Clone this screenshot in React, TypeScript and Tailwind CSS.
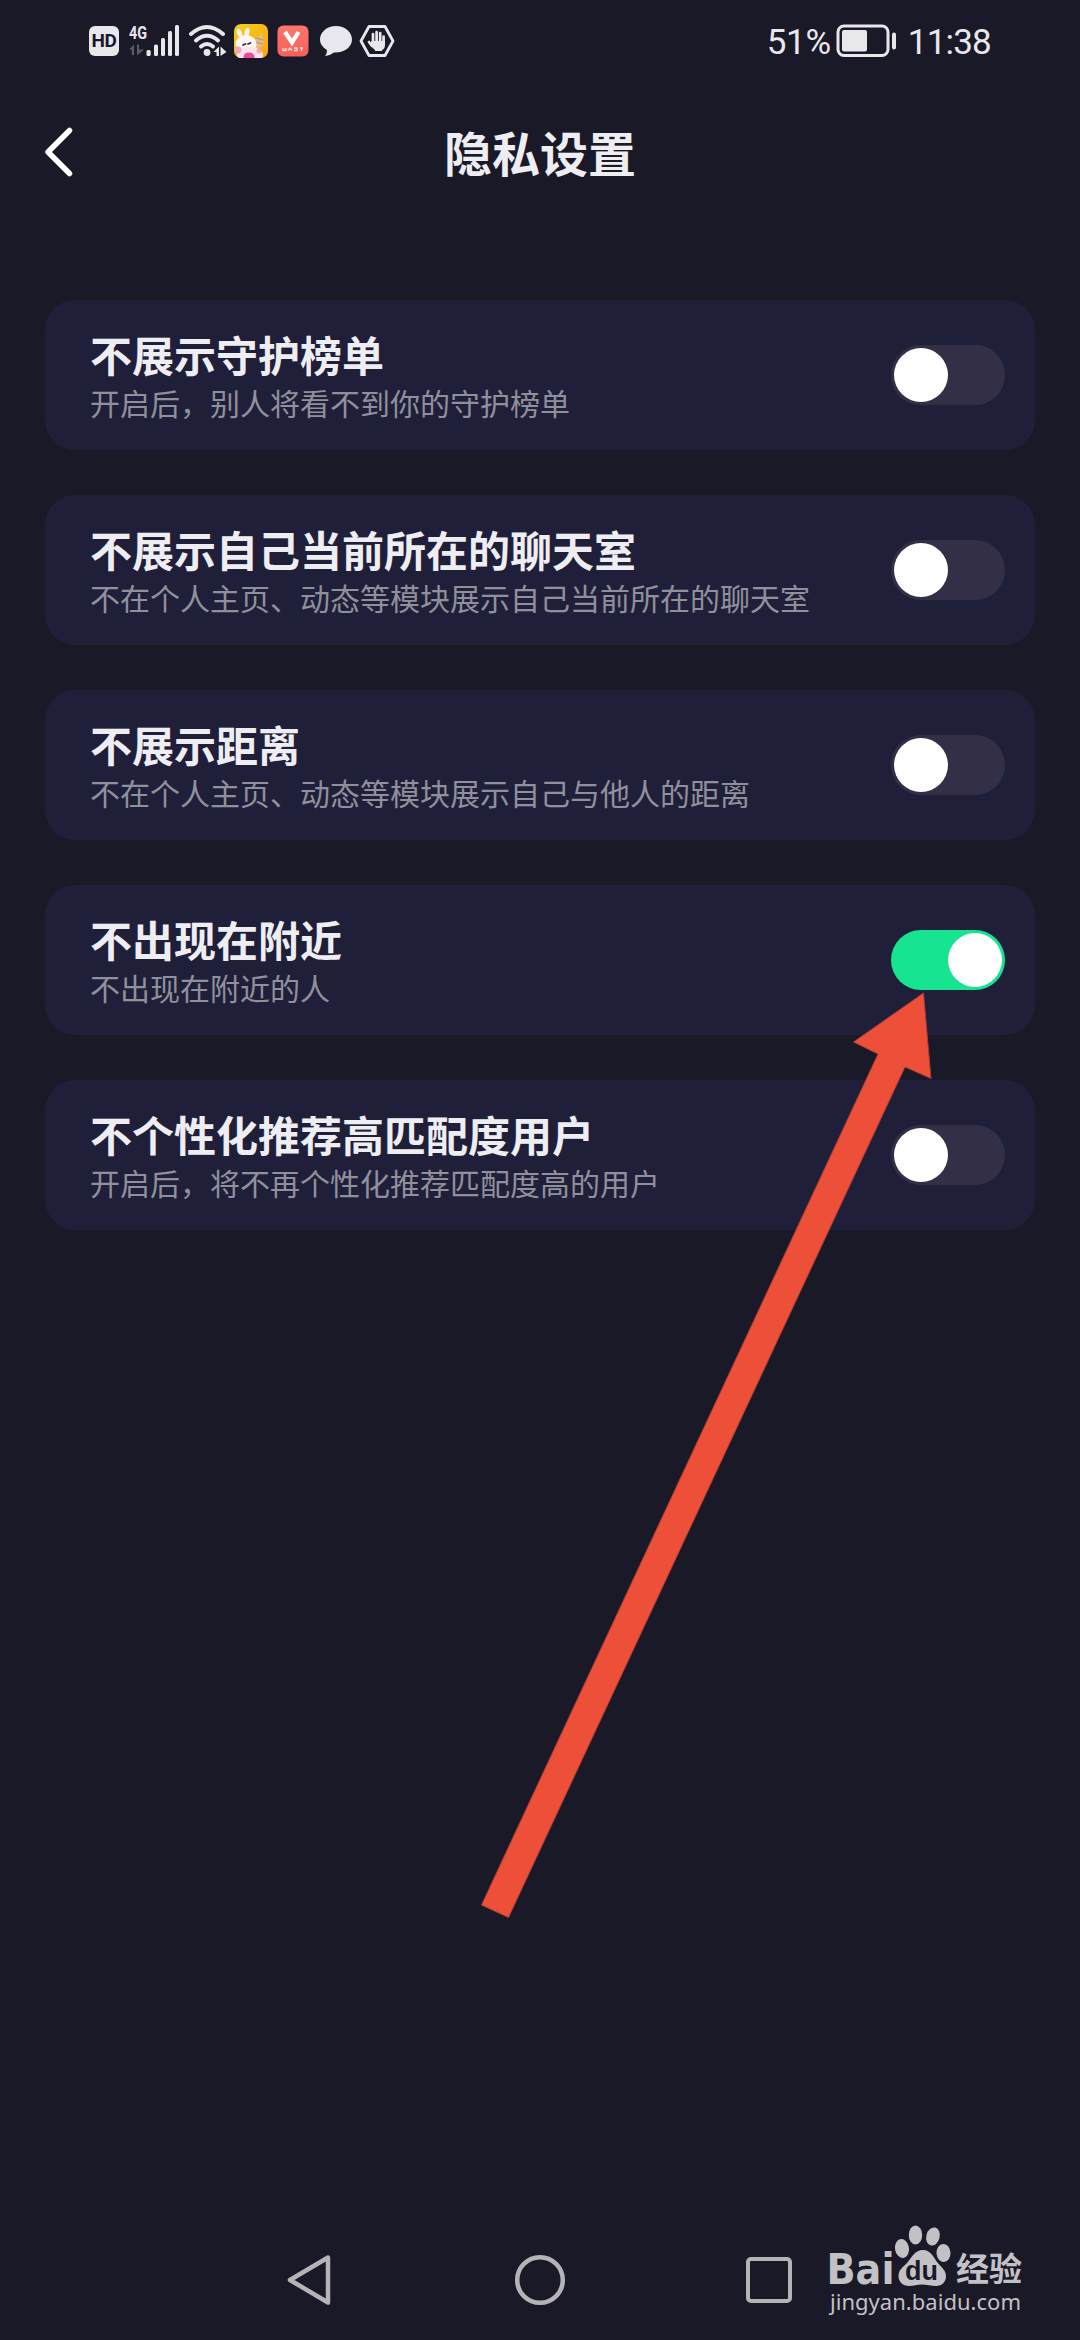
import React from "react";

const settings = [
  { title: "不展示守护榜单", note: "开启后，别人将看不到你的守护榜单", on: false },
  { title: "不展示自己当前所在的聊天室", note: "不在个人主页、动态等模块展示自己当前所在的聊天室", on: false },
  { title: "不展示距离", note: "不在个人主页、动态等模块展示自己与他人的距离", on: false },
  { title: "不出现在附近", note: "不出现在附近的人", on: true },
  { title: "不个性化推荐高匹配度用户", note: "开启后，将不再个性化推荐匹配度高的用户", on: false },
];

function SignalIcon() {
  return (
    <svg className="ml-[9px] h-[44px] w-[54px]" viewBox="0 -5 54 44">
      <text x="1" y="15" fontFamily="Roboto, sans-serif" fontWeight="700" fontSize="19" fill="#e8e7ec" textLength="18" lengthAdjust="spacingAndGlyphs">4G</text>
      <g fill="#5c5b66">
        <path d="M1 25.500L6 20.500V31H3.800V25.500Z" />
        <path d="M9 20.500H11V25.500H16L9 31.500Z" />
      </g>
      <g fill="#e8e7ec">
        <rect x="18.500" y="26" width="4.200" height="6" rx="1.500" />
        <rect x="26" y="20.500" width="4" height="11.500" rx="1.500" />
        <rect x="33" y="14" width="4" height="18" rx="1.500" />
        <rect x="40" y="7" width="4" height="25" rx="1.500" />
        <rect x="47" y="1" width="4" height="31" rx="1.500" />
      </g>
    </svg>
  );
}

function WifiIcon() {
  return (
    <svg className="ml-[6px] h-[34px] w-[40px]" viewBox="0 0 40 34">
      <g fill="none" stroke="#e8e7ec" strokeWidth="4" strokeLinecap="round">
        <path d="M3 10Q19 -4 35 10" />
        <path d="M8 16.500Q19 7 30 16.500" />
        <path d="M13 22.500Q19 17.500 25 22.500" />
      </g>
      <circle cx="19" cy="28.500" r="3.400" fill="#e8e7ec" />
      <path d="M25.500 28L31 22.500V32H28.500V28ZM32.500 22.500L38.500 28L32.500 32Z" fill="#e8e7ec" />
    </svg>
  );
}

function BunnyAppIcon() {
  return (
    <svg className="ml-[6px] h-[34px] w-[34px]" viewBox="0 0 34 34">
      <defs>
        <clipPath id="bunny"><rect width="34" height="34" rx="7" /></clipPath>
        <linearGradient id="gold" x1="0" y1="0" x2="1" y2="1">
          <stop stopColor="#f2cf22" />
          <stop offset="1" stopColor="#f8a50b" />
        </linearGradient>
      </defs>
      <g clipPath="url(#bunny)">
        <rect width="34" height="34" fill="url(#gold)" />
        <ellipse cx="5.500" cy="9" rx="2.400" ry="4.500" fill="#fff3ef" transform="rotate(-20 5.500 9)" />
        <ellipse cx="13" cy="8.500" rx="2.400" ry="4.500" fill="#fff3ef" transform="rotate(12 13 8.500)" />
        <path d="M19 18L28 9L30 21L23 25Z" fill="#e8b98a" />
        <path d="M22 14L29 16M21 18L29 20" stroke="#a9967c" strokeWidth="1.200" />
        <ellipse cx="12" cy="20" rx="10.500" ry="9" fill="#fff8f8" />
        <ellipse cx="16" cy="31" rx="13" ry="8" fill="#ffe3ec" />
        <ellipse cx="15" cy="33" rx="5.500" ry="4.500" fill="#ee4796" />
        <circle cx="4" cy="26" r="3.500" fill="#f8a3b9" />
        <path d="M9 21L11.500 20M14 20L16.500 19" stroke="#43242c" strokeWidth="1.800" strokeLinecap="round" />
        <circle cx="25" cy="27" r="2.500" fill="#f8a3b9" />
      </g>
    </svg>
  );
}

function VAppIcon() {
  return (
    <svg className="ml-[9px] h-[32px] w-[32px]" viewBox="0 0 32 32">
      <defs>
        <linearGradient id="coral" x1="0" y1="0" x2="0" y2="1">
          <stop stopColor="#fb776a" />
          <stop offset="1" stopColor="#f95f5c" />
        </linearGradient>
      </defs>
      <rect x="0.500" y="0.500" width="31" height="31" rx="6" fill="url(#coral)" />
      <path d="M8 7L15 17.500L21.500 7" fill="none" stroke="#fff" strokeWidth="4.200" />
      <path d="M6 23v2.500h3V23M11 25.500l2-2.500 2 2.500M17 25.500h3v-2.500h-3M23 23h3M24.500 23v3" fill="none" stroke="#ffe2dd" strokeWidth="1.300" />
    </svg>
  );
}

function StatusBar() {
  return (
    <div className="flex h-[82px] items-center justify-between pl-[89px] pr-[89px]">
      <div className="flex h-full items-center">
        <div className="flex h-[30px] w-[30px] items-center justify-center rounded-[6px] bg-[#e8e7ec] font-[Roboto,sans-serif] text-[19px] font-bold tracking-[-0.5px] text-[#1a1927]">HD</div>
        <SignalIcon />
        <WifiIcon />
        <BunnyAppIcon />
        <VAppIcon />
        <svg className="ml-[10px] h-[34px] w-[34px]" viewBox="0 0 34 34">
          <path d="M17 2C8 2 1 8 1 15.500C1 20 4 23.500 8 26C8 29 7 31 6 32C10 31.500 13 30 15 28.500C25.500 29 33 23 33 15.500C33 8 26 2 17 2Z" fill="#e8e7ec" />
        </svg>
        <svg className="ml-[6px] h-[34px] w-[36px]" viewBox="0 0 36 34">
          <path d="M10 2.500H26L34 17L26 31.500H10L2 17Z" fill="none" stroke="#e8e7ec" strokeWidth="2.800" strokeLinejoin="round" />
          <g fill="none" stroke="#e8e7ec" strokeWidth="2.700" strokeLinecap="round">
            <path d="M14 10V19M17.600 8V19M21.200 9V19M24.600 12.500V20" />
            <path d="M10 18L13 22" />
          </g>
          <path d="M12.600 17H26V21C26 24 24.500 25.500 23 26V27H16V26C13.500 24.500 12.800 22 11 20Z" fill="#e8e7ec" />
        </svg>
      </div>
      <div className="flex h-full items-center font-[Roboto,sans-serif] text-[35px] leading-none text-[#e8e7ec]">
        <span className="pt-[2px] tracking-[-0.3px]">51%</span>
        <svg className="ml-[5px] h-[34px] w-[62px]" viewBox="0 0 62 34">
          <rect x="2" y="2" width="50" height="29.500" rx="6" fill="none" stroke="#e8e7ec" strokeWidth="3" />
          <rect x="6" y="6" width="25" height="21.500" rx="2" fill="#e8e7ec" />
          <rect x="56" y="8.500" width="4" height="17" rx="2" fill="#e8e7ec" />
        </svg>
        <span className="ml-[10px] pt-[2px] tracking-[-0.8px]">11:38</span>
      </div>
    </div>
  );
}

function Toggle({ on }: { on: boolean }) {
  return (
    <div className={on ? "flex h-[60px] w-[114px] items-center justify-end rounded-full bg-[#17e491] p-[3px]" : "flex h-[60px] w-[114px] items-center rounded-full bg-[#322f47] p-[3px]"}>
      <div className="h-[54px] w-[54px] rounded-full bg-white" />
    </div>
  );
}

function Watermark() {
  return (
    <svg className="absolute left-[824px] top-[2220px] h-[100px] w-[204px]" viewBox="0 0 204 100" fill="#c2c1c6">
      <text x="2.500" y="64" fontFamily="DejaVu Sans, sans-serif" fontWeight="700" fontSize="42" textLength="68" lengthAdjust="spacingAndGlyphs">Bai</text>
      <ellipse cx="78" cy="28.500" rx="7" ry="9.500" transform="rotate(-8 78 28.500)" />
      <ellipse cx="91.500" cy="15" rx="6.700" ry="9.500" />
      <ellipse cx="109" cy="16.500" rx="6.700" ry="9.200" transform="rotate(14 109 16.500)" />
      <ellipse cx="119.500" cy="33" rx="7" ry="9" transform="rotate(-4 119.500 33)" />
      <path d="M99 30C91 30 88 37 83 43C78 48 74.500 50 74.500 56C74.500 62 79 66 85 66C90 66 93 64.500 98 64.500C103 64.500 107 66 112 66C118 66 122 62 122 56C122 50 117 47 113 42C109 36 106 30 99 30Z" />
      <text x="81" y="60" fill="#1a1927" fontFamily="Liberation Sans, sans-serif" fontWeight="700" fontSize="27" textLength="33" lengthAdjust="spacingAndGlyphs">du</text>
      <text x="132" y="61" fontFamily="Noto Sans CJK SC, sans-serif" fontWeight="700" fontSize="33" textLength="66" lengthAdjust="spacingAndGlyphs">经验</text>
      <text x="6" y="90" fontFamily="Noto Sans, sans-serif" fontSize="22" textLength="191" lengthAdjust="spacing">jingyan.baidu.com</text>
    </svg>
  );
}

export default function App() {
  return (
    <div className="relative flex h-[2340px] w-[1080px] flex-col overflow-hidden bg-[#1a1927] font-['Noto_Sans_CJK_SC',sans-serif]">
      <StatusBar />
      <header className="flex h-[146px] items-start px-[45px] pt-[37px]">
        <svg className="mt-[8px] h-[50px] w-[28px]" viewBox="0 0 28 50" fill="none" stroke="#fff" strokeWidth="5.500" strokeLinecap="round" strokeLinejoin="round">
          <path d="M24.500 3.500L3 25L24.500 46.500" />
        </svg>
        <h1 className="mr-[28px] flex-1 text-center text-[48px] font-bold leading-[64px] text-[#ededf2]">隐私设置</h1>
      </header>
      <main className="mt-[72px] flex flex-1 flex-col gap-[45px] px-[45px]">
        {settings.map((s) => (
          <section key={s.title} className="flex h-[150px] items-center justify-between rounded-[30px] bg-[#201f39] pl-[45px] pr-[30px]">
            <div className="flex flex-col pb-[1px]">
              <h2 className="whitespace-nowrap text-[42px] font-bold leading-[54px] text-[#ededf2]">{s.title}</h2>
              <p className="whitespace-nowrap text-[30px] leading-[42px] text-[#90909c]">{s.note}</p>
            </div>
            <Toggle on={s.on} />
          </section>
        ))}
      </main>
      <nav className="flex h-[120px] items-center pl-[286px]">
        <svg className="h-[54px] w-[46px]" viewBox="0 0 46 54" fill="none" stroke="#b4b3b8" strokeWidth="4.500" strokeLinejoin="round">
          <path d="M42 4.500L4 27L42 49.500Z" />
        </svg>
        <svg className="ml-[181px] h-[54px] w-[54px]" viewBox="0 0 54 54" fill="none" stroke="#b4b3b8" strokeWidth="4.500">
          <circle cx="27" cy="27" r="22.800" />
        </svg>
        <div className="ml-[179px] h-[46px] w-[46px] rounded-[5px] border-[4.500px] border-[#b4b3b8]" />
      </nav>
      <svg className="absolute left-0 top-0 h-[2340px] w-[1080px]" viewBox="0 0 1080 2340">
        <path d="M923.500 993L931 1078.500L905 1067L508.500 1917.500L481.500 1905L878 1054L853.500 1042Z" fill="#ee4f39" stroke="#a93c34" strokeWidth="1" />
      </svg>
      <Watermark />
    </div>
  );
}
